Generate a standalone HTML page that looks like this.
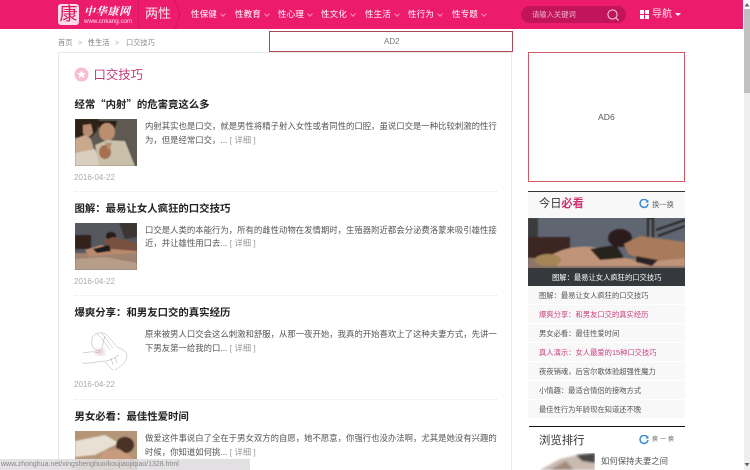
<!DOCTYPE html>
<html lang="zh-CN">
<head>
<meta charset="utf-8">
<title>口交技巧</title>
<style>
html,body{margin:0;padding:0;width:750px;height:470px;overflow:hidden;background:#fff}
body{font-family:"Liberation Sans","Noto Sans CJK TC",sans-serif;color:#444}
#w{position:relative;width:750px;height:470px;overflow:hidden;filter:blur(.3px)}
.a{position:absolute;white-space:nowrap}
.hd{left:0;top:0;width:743px;height:29px;background:#ec1b6c}
.nav{top:9px;font-size:8.6px;line-height:11px;color:#fff}
.nav i{display:inline-block;width:3px;height:3px;border-right:1px solid #f48fb8;border-bottom:1px solid #f48fb8;transform:rotate(45deg);margin:0 0 2px 4px;vertical-align:middle}
.t{left:74.5px;font-size:10.4px;line-height:14px;color:#222;font-weight:bold}
.q{font-family:"Noto Sans CJK TC",sans-serif}
.p{left:145px;font-size:8.4px;line-height:12px;color:#555}
.p span{color:#999}
.d{left:74px;font-size:8px;line-height:10px;color:#aaa}
.l{left:74px;width:423px;height:0;border-top:1px dotted #e6e6e6}
.r{left:539px;font-size:7.3px;line-height:11px;color:#555}
.pk{color:#c8407c}
svg{display:block}
</style>
</head>
<body>
<div id="w">
<div class="a hd"></div>
<div class="a" style="left:58px;top:4px;width:21px;height:21px;border-radius:3px;background:#fbdbe7;color:#d8165f;font-size:18px;line-height:21px;text-align:center">康</div>
<div class="a" style="left:84px;top:6px;font:italic bold 11px/13px 'Liberation Serif','Noto Serif CJK SC',serif;color:#fff;letter-spacing:.7px">中华康网</div>
<div class="a" style="left:84px;top:18px;font-size:6.2px;line-height:7px;color:#fde">www.cnkang.com</div>
<div class="a" style="left:138px;top:0;width:1px;height:29px;background:#d5155f"></div>
<div class="a" style="left:145px;top:5px;font-size:13px;line-height:17px;color:#fde9f1">两性</div>
<svg class="a" style="left:174px;top:0" width="8" height="29"><path d="M1 0L6 14L1 29" fill="none" stroke="#d5155f"/></svg>
<div class="a nav" style="left:191px">性保健<i></i></div>
<div class="a nav" style="left:235px">性教育<i></i></div>
<div class="a nav" style="left:278px">性心理<i></i></div>
<div class="a nav" style="left:321px">性文化<i></i></div>
<div class="a nav" style="left:365px">性生活<i></i></div>
<div class="a nav" style="left:408px">性行为<i></i></div>
<div class="a nav" style="left:452px">性专题<i></i></div>
<div class="a" style="left:521px;top:6px;width:105px;height:17px;border-radius:9px;background:#c2145a"></div>
<div class="a" style="left:532px;top:9px;font-size:7.3px;line-height:11px;color:#eeb4cc">请输入关键词</div>
<svg class="a" style="left:606px;top:8px" width="14" height="14" viewBox="0 0 14 14"><circle cx="6.5" cy="6.5" r="4.6" fill="none" stroke="#f6d5e3" stroke-width="1"/><path d="M10 10L12.5 12.5" stroke="#f6d5e3"/></svg>
<svg class="a" style="left:640px;top:10px" width="9" height="9"><path d="M0 0H4V4H0ZM5 0H9V4H5ZM0 5H4V9H0ZM5 5H9V9H5Z" fill="#fff"/></svg>
<div class="a" style="left:652px;top:7.5px;font-size:10px;line-height:14px;color:#fde4ee">导航</div>
<svg class="a" style="left:675px;top:13px" width="6" height="4"><path d="M0 0H6L3 3Z" fill="#fff"/></svg>

<div class="a" style="left:58px;top:38px;font-size:7.2px;line-height:10px;color:#888">首页</div>
<div class="a" style="left:78px;top:38px;font-size:7.2px;line-height:10px;color:#aaa">&gt;</div>
<div class="a" style="left:88px;top:38px;font-size:7.2px;line-height:10px;color:#777">性生活</div>
<div class="a" style="left:115px;top:38px;font-size:7.2px;line-height:10px;color:#aaa">&gt;</div>
<div class="a" style="left:126px;top:38px;font-size:7.2px;line-height:10px;color:#888">口交技巧</div>

<div class="a" style="left:58px;top:52px;width:454px;height:430px;border:1px solid #e9e9e9;box-sizing:border-box"></div>
<div class="a" style="left:269px;top:31px;width:244px;height:21px;box-sizing:border-box;border:1px solid #a84a55;background:#fff"></div>
<div class="a" style="left:384px;top:36px;font-size:8px;line-height:11px;color:#777">AD2</div>

<svg class="a" style="left:74px;top:67px" width="15" height="15" viewBox="0 0 15 15"><circle cx="7.5" cy="7.5" r="7" fill="#f6bdd3"/><path d="M7.5 3L8.8 6H12L9.5 8L10.4 11.2L7.5 9.4L4.6 11.2L5.5 8L3 6H6.2Z" fill="#fff"/></svg>
<div class="a" style="left:93.5px;top:67px;font-size:12.4px;line-height:16px;color:#c43a78">口交技巧</div>

<!-- article 1 -->
<div class="a t" style="top:97px">经常<span class="q">“</span>内射<span class="q">”</span>的危害竟这么多</div>
<svg class="a" style="left:75px;top:119px" width="62" height="47" viewBox="0 0 62 47"><defs><filter id="b1"><feGaussianBlur stdDeviation=".5"/></filter></defs><rect width="62" height="47" fill="#5e5a52"/><g filter="url(#b1)"><path d="M0 0H24L22 12L14 20L0 18Z" fill="#2e2018"/><path d="M8 6L16 5L18 14L12 20L8 14Z" fill="#b98c72"/><path d="M0 20L10 16L16 20L24 47H0Z" fill="#c9a98e"/><path d="M0 34L20 30L26 47H0Z" fill="#d8cfc0"/><path d="M22 2H42L40 9H24Z" fill="#2c1c12"/><ellipse cx="32" cy="13" rx="8" ry="9" fill="#bb8e70"/><path d="M20 26L32 21L50 22L60 47H24Z" fill="#c8c0a8"/><ellipse cx="30" cy="33" rx="6" ry="7" fill="#a46f50"/><path d="M30 24L34 32L37 24Z" fill="#b98c70"/></g></svg>
<div class="a p" style="top:120px">内射其实也是口交，就是男性将精子射入女性或者同性的口腔，虽说口交是一种比较刺激的性行</div>
<div class="a p" style="top:134px">为，但是经常口交，... <span>[ 详细 ]</span></div>
<div class="a d" style="top:172.5px">2016-04-22</div>
<div class="a l" style="top:191px"></div>

<!-- article 2 -->
<div class="a t" style="top:203px">图解：最易让女人疯狂的口交技巧</div>
<svg class="a" style="left:75px;top:223px" width="62" height="47" viewBox="0 0 62 47"><defs><filter id="b2"><feGaussianBlur stdDeviation=".5"/></filter></defs><rect width="62" height="47" fill="#55585f"/><g filter="url(#b2)"><rect x="0" y="12" width="16" height="14" fill="#33231c"/><path d="M44 0H62V14L50 16Z" fill="#3e3632"/><path d="M0 30H62V47H0Z" fill="#9f8270"/><path d="M10 27L26 22L34 24L50 20L62 26V30L30 32L14 34Z" fill="#b98a6d"/><ellipse cx="36" cy="13" rx="5" ry="4" fill="#251c18"/><path d="M28 18L38 14L62 20V28L36 26Z" fill="#7a5140"/><path d="M18 26L34 22L36 28L22 30Z" fill="#1e1a1c"/><path d="M0 36L30 34L62 40V47H0Z" fill="#b79e8a"/></g></svg>
<div class="a p" style="top:224px">口交是人类的本能行为，所有的雌性动物在发情期时，生殖器附近都会分泌费洛蒙来吸引雄性接</div>
<div class="a p" style="top:237px">近，并让雄性用口去... <span>[ 详细 ]</span></div>
<div class="a d" style="top:276.5px">2016-04-22</div>
<div class="a l" style="top:295px"></div>

<!-- article 3 -->
<div class="a t" style="top:307px">爆爽分享：和男友口交的真实经历</div>
<svg class="a" style="left:75px;top:327px" width="62" height="47" viewBox="0 0 62 47"><defs><filter id="b3"><feGaussianBlur stdDeviation="2"/></filter></defs><ellipse cx="25" cy="25" rx="5" ry="3.5" fill="#e6cdd6" filter="url(#b3)"/><g fill="none" stroke="#aaa" stroke-width=".5"><path d="M17 14C16 8 22 5 28 6C34 8 38 16 42 20C46 22 52 24 52 28C52 34 46 40 40 43"/><path d="M17 14C16 20 20 24 25 24C28 22 28 14 30 9"/><path d="M22 7C27 11 31 17 35 23M26 6C31 11 35 18 38 21"/><path d="M8 26C14 25 19 24 24 26"/><path d="M7 36C16 37 24 34 31 34C36 33 40 31 44 28"/><path d="M30 35C33 38 35 41 38 43M36 31L38 38M40 30L42 36"/></g></svg>
<div class="a p" style="top:328px">原来被男人口交会这么刺激和舒服，从那一夜开始，我真的开始喜欢上了这种夫妻方式，先讲一</div>
<div class="a p" style="top:342px">下男友第一给我的口... <span>[ 详细 ]</span></div>
<div class="a d" style="top:380px">2016-04-22</div>
<div class="a l" style="top:399px"></div>

<!-- article 4 -->
<div class="a t" style="top:411px">男女必看：最佳性爱时间</div>
<svg class="a" style="left:75px;top:431px" width="62" height="39" viewBox="0 0 62 39"><defs><filter id="b4"><feGaussianBlur stdDeviation=".7"/></filter></defs><rect width="62" height="39" fill="#b49578"/><g filter="url(#b4)"><path d="M0 10L30 4L44 12L20 24L0 26Z" fill="#e8e0d2"/><ellipse cx="50" cy="14" rx="9" ry="8" fill="#4a3226"/><path d="M20 39L28 20L44 18L56 26L62 39Z" fill="#c99b7e"/><path d="M0 28H22L18 39H0Z" fill="#c9b59e"/></g></svg>
<div class="a p" style="top:432px">做爱这件事说白了全在于男女双方的自愿，她不愿意，你强行也没办法啊，尤其是她没有兴趣的</div>
<div class="a p" style="top:446px">时候，你知道如何挑... <span>[ 详细 ]</span></div>

<!-- sidebar -->
<div class="a" style="left:528px;top:52px;width:157px;height:130px;box-sizing:border-box;border:1px solid #cf5a66;background:#fff"></div>
<div class="a" style="left:598px;top:112px;font-size:8.6px;line-height:11px;color:#555">AD6</div>

<div class="a" style="left:528px;top:191px;width:157px;height:227px;background:#f9f8f9;border-top:1px solid #333;box-sizing:border-box"></div>
<div class="a" style="left:539px;top:197px;font-size:11.2px;line-height:15px;color:#333">今日<span style="color:#d0306f;font-weight:bold">必看</span></div>
<svg class="a" style="left:639px;top:199px" width="10" height="10" viewBox="0 0 10 10"><path d="M8.4 2.2A4 4 0 1 0 9 5" fill="none" stroke="#3b8ad6" stroke-width="1.5"/><path d="M9.4 .6V3.6H6.4Z" fill="#3b8ad6"/></svg>
<div class="a" style="left:652px;top:199px;font-size:7.3px;line-height:11px;color:#666">换一换</div>
<svg class="a" style="left:528px;top:218px" width="157" height="68" viewBox="0 0 157 68"><defs><filter id="b5"><feGaussianBlur stdDeviation=".7"/></filter></defs><rect width="157" height="68" fill="#5f6672"/><g filter="url(#b5)"><rect x="0" y="0" width="10" height="19" fill="#3a3a3a"/><rect x="0" y="19" width="42" height="21" fill="#3a2720"/><path d="M120 0H125V24H120ZM128 12L157 2M130 18L157 8" stroke="#2a2626" stroke-width="2" fill="none"/><path d="M0 40H157V50H0Z" fill="#8f7568"/><path d="M18 40C34 30 52 26 70 30L90 38L112 44L157 40V48H30Z" fill="#c09478"/><ellipse cx="20" cy="42" rx="13" ry="6" fill="#a48554"/><path d="M62 31L88 27L96 40L72 42Z" fill="#25201f"/><ellipse cx="92" cy="20" rx="12" ry="9" fill="#2b1f1b"/><path d="M96 26L112 18L157 24V40L120 44L100 36Z" fill="#a97a5c"/><path d="M108 38L130 42L124 48L108 44Z" fill="#2a2426"/></g><rect y="50" width="157" height="18" fill="#1c1c1c" opacity=".62"/></svg>
<div class="a" style="left:552px;top:272px;font-size:7.3px;line-height:11px;color:#fff">图解：最易让女人疯狂的口交技巧</div>
<div class="a r" style="top:290px">图解：最易让女人疯狂的口交技巧</div>
<div class="a r pk" style="top:309px">爆爽分享：和男友口交的真实经历</div>
<div class="a r" style="top:328px">男女必看：最佳性爱时间</div>
<div class="a r pk" style="top:347px">真人演示：女人最爱的15种口交技巧</div>
<div class="a r" style="top:366px">夜夜销魂，后宫尔歌体验超强性魔力</div>
<div class="a r" style="top:385px">小情趣：最适合情侣的接吻方式</div>
<div class="a r" style="top:404px">最佳性行为年龄现在知道还不晚</div>
<div class="a" style="left:528px;top:304px;width:157px;border-top:1px solid #fff"></div>
<div class="a" style="left:528px;top:323px;width:157px;border-top:1px solid #fff"></div>
<div class="a" style="left:528px;top:342px;width:157px;border-top:1px solid #fff"></div>
<div class="a" style="left:528px;top:361px;width:157px;border-top:1px solid #fff"></div>
<div class="a" style="left:528px;top:380px;width:157px;border-top:1px solid #fff"></div>
<div class="a" style="left:528px;top:399px;width:157px;border-top:1px solid #fff"></div>

<div class="a" style="left:529px;top:426px;width:156px;height:1px;background:#111"></div>
<div class="a" style="left:539px;top:433.5px;font-size:11.4px;line-height:15px;color:#333">浏览排行</div>
<svg class="a" style="left:639px;top:435px" width="10" height="10" viewBox="0 0 10 10"><path d="M8.4 2.2A4 4 0 1 0 9 5" fill="none" stroke="#3b8ad6" stroke-width="1.5"/><path d="M9.4 .6V3.6H6.4Z" fill="#3b8ad6"/></svg>
<div class="a" style="left:652px;top:435px;font-size:6px;line-height:11px;color:#666;letter-spacing:2px">换一换</div>
<svg class="a" style="left:540px;top:453px" width="55" height="17" viewBox="0 0 55 17"><defs><filter id="b6"><feGaussianBlur stdDeviation="1"/></filter></defs><g filter="url(#b6)"><path d="M0 17L20 6L42 1H55V17Z" fill="#c9bab2"/><path d="M36 2L55 0V10L42 8Z" fill="#4c4644"/><path d="M10 17L26 8L34 17Z" fill="#a38b7e"/></g></svg>
<div class="a" style="left:601px;top:455px;font-size:8.4px;line-height:12px;color:#555">如何保持夫妻之间</div>

<!-- scrollbar -->
<div class="a" style="left:743.5px;top:0;width:6.5px;height:470px;background:#f0eef0"></div>
<div class="a" style="left:743.5px;top:0;width:6.5px;height:9px;background:#fafafa"></div>
<div class="a" style="left:743.5px;top:9px;width:6.5px;height:84px;background:#c1c0c1"></div>
<svg class="a" style="left:744px;top:3px" width="6" height="4"><path d="M3 0L5.5 3.5H.5Z" fill="#666"/></svg>
<svg class="a" style="left:744px;top:463px" width="6" height="4"><path d="M3 3.5L5.5 0H.5Z" fill="#666"/></svg>

<!-- status bar -->
<div class="a" style="left:0;top:459px;width:250px;height:11px;background:rgba(222,220,222,.88)"></div>
<div class="a" style="left:1px;top:460px;font-size:7px;line-height:9px;color:#888">www.zhonghua.net/xingshenghuo/koujiaojiqiao/1328.html</div>
</div>
</body>
</html>
